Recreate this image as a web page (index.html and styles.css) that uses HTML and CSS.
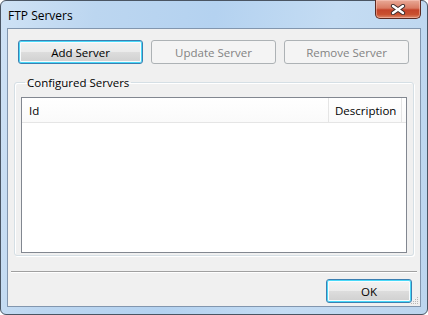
FILE: index.html
```html
<!DOCTYPE html>
<html>
<head>
    <link rel="stylesheet" href="styles.css">
</head>
<body>
    <div class="window">
        <div class="titlebar">
            <span class="title">FTP Servers</span>
            <div class="close-btn">
                <svg width="16" height="11" viewBox="0 0 16 11">
                    <path d="M3 2 L13 9 M13 2 L3 9" stroke="#3a2a2a" stroke-width="4.2" stroke-linecap="round"/>
                    <path d="M3 2 L13 9 M13 2 L3 9" stroke="#ffffff" stroke-width="2.4" stroke-linecap="round"/>
                </svg>
            </div>
        </div>
        <div class="client">
            <div class="toolbar">
                <button class="btn default">Add Server</button>
                <button class="btn" disabled>Update Server</button>
                <button class="btn" disabled>Remove Server</button>
            </div>
            <fieldset class="groupbox">
                <legend>Configured Servers</legend>
                <div class="listview">
                    <div class="list-header">
                        <div class="col col-id">Id</div>
                        <div class="col col-desc">Description</div>
                        <div class="col col-fill"></div>
                    </div>
                    <div class="list-body"></div>
                </div>
            </fieldset>
            <div class="separator"></div>
            <div class="footer">
                <button class="btn default ok">OK</button>
            </div>
            <svg class="grip" width="8" height="8" viewBox="0 0 8 8">
                <rect x="6" y="0" width="1" height="1" fill="#b8b8b8"/>
                <rect x="4" y="2" width="1" height="1" fill="#b8b8b8"/>
                <rect x="6" y="2" width="1" height="1" fill="#b8b8b8"/>
                <rect x="2" y="4" width="1" height="1" fill="#b8b8b8"/>
                <rect x="4" y="4" width="1" height="1" fill="#b8b8b8"/>
                <rect x="6" y="4" width="1" height="1" fill="#b8b8b8"/>
                <rect x="0" y="6" width="1" height="1" fill="#b8b8b8"/>
                <rect x="2" y="6" width="1" height="1" fill="#b8b8b8"/>
                <rect x="4" y="6" width="1" height="1" fill="#b8b8b8"/>
                <rect x="6" y="6" width="1" height="1" fill="#b8b8b8"/>
            </svg>
        </div>
    </div>
</body>
</html>
```

FILE: styles.css
```css
body {
  margin: 0;
  font-family: "Open Sans", "Noto Sans", sans-serif;
  font-size: 11px;
  color: #000;
  background: #ffffff;
}

.window {
  box-sizing: border-box;
  width: 428px;
  height: 315px;
  border: 1px solid #4a5563;
  border-radius: 6px;
  padding: 0 6px 7px 6px;
  display: flex;
  flex-direction: column;
  position: relative;
  background: linear-gradient(100deg, #cfe2f5 0%, #bcd6f0 20%, #b4d2f0 45%, #c4dcf3 70%, #bcd5ee 100%);
}

.titlebar {
  height: 27px;
  flex: none;
  display: flex;
  align-items: center;
  padding-left: 1px;
}

.title {
  font-size: 12px;
  padding-top: 1px;
}

.close-btn {
  position: absolute;
  top: -1px;
  right: 6px;
  width: 44px;
  height: 18px;
  border: 1px solid #5b2a22;
  border-top: none;
  border-radius: 0 0 5px 5px;
  background: linear-gradient(#e9aa98 0%, #d97b63 45%, #c4442a 55%, #c9502f 80%, #dd8a6c 100%);
  display: flex;
  align-items: center;
  justify-content: center;
  box-shadow: inset 0 0 0 1px rgba(255, 210, 200, 0.45);
}

.client {
  flex: 1;
  border: 1px solid #8296ae;
  background: #f0f0f0;
  display: flex;
  flex-direction: column;
  position: relative;
}

.toolbar {
  display: flex;
  gap: 8px;
  padding: 11px 0 0 10px;
}

.btn {
  box-sizing: border-box;
  width: 125px;
  height: 24px;
  font-family: inherit;
  font-size: 11.5px;
  color: #000;
  border: 1px solid #707070;
  border-radius: 3px;
  background: linear-gradient(#f2f2f2 0%, #ebebeb 50%, #dddddd 50%, #cfcfcf 100%);
  box-shadow: inset 0 0 0 1px #fcfcfc;
  padding: 0;
}

.btn.default {
  border-color: #3c7fb1;
  box-shadow: inset 0 0 0 1px #48d8f8, inset 0 0 0 2px #f8fbfd;
}

.btn:disabled {
  border-color: #adb2b5;
  background: #f4f4f4;
  color: #838383;
  box-shadow: none;
}

.groupbox {
  margin: 11px 6px 0 6px;
  padding: 7px 6px 6px 6px;
  border: 1px solid #d5dfe5;
  border-radius: 3px;
  box-shadow: inset 1px 1px 0 #ffffff, 1px 1px 0 #ffffff;
  height: 181px;
  box-sizing: border-box;
  min-width: 0;
}

.groupbox legend {
  padding: 0 2px;
  margin-left: 4px;
  font-size: 11.5px;
}

.listview {
  border: 1px solid #828790;
  background: #ffffff;
  height: 156px;
  box-sizing: border-box;
  display: flex;
  flex-direction: column;
}

.list-header {
  display: flex;
  height: 24px;
  border-bottom: 1px solid #e5e5e5;
  background: linear-gradient(#ffffff, #fafafa);
}

.col {
  display: flex;
  align-items: center;
  padding-left: 7px;
  font-size: 11.5px;
  border-right: 1px solid #e5e5e5;
}

.col-id {
  width: 299px;
}

.col-desc {
  width: 66px;
  padding-left: 6px;
}

.col-fill {
  flex: 1;
  border-right: none;
  padding: 0;
}

.separator {
  margin: 15px 3px 0 3px;
  height: 1px;
  background: #a0a0a0;
  border-bottom: 1px solid #ffffff;
}

.footer {
  display: flex;
  justify-content: flex-end;
  padding: 6px 8px 0 0;
}

.btn.ok {
  width: 86px;
}

.grip {
  position: absolute;
  right: 1px;
  bottom: 1px;
}
```
